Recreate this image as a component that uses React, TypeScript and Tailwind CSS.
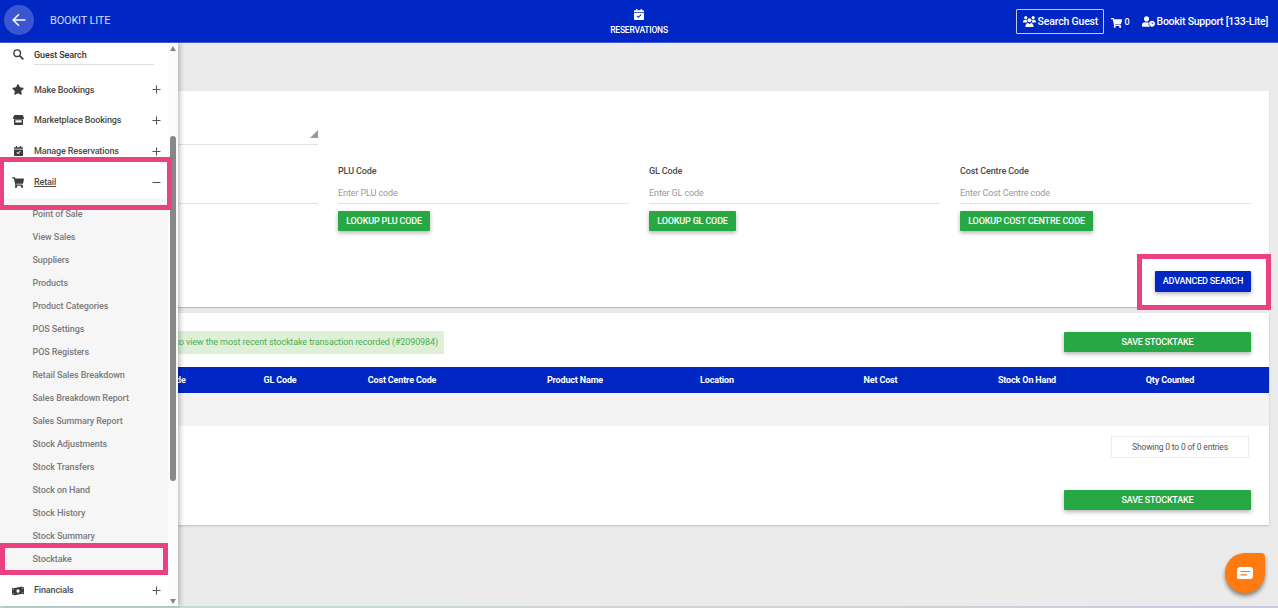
import type { ReactNode } from "react";
import { FaStar, FaShoppingCart, FaMoneyBillWave, FaUserClock } from "react-icons/fa";

const retailLinks = [
  "Point of Sale",
  "View Sales",
  "Suppliers",
  "Products",
  "Product Categories",
  "POS Settings",
  "POS Registers",
  "Retail Sales Breakdown",
  "Sales Breakdown Report",
  "Sales Summary Report",
  "Stock Adjustments",
  "Stock Transfers",
  "Stock on Hand",
  "Stock History",
  "Stock Summary",
  "Stocktake",
];

const lookups = [
  { label: "PLU Code", hint: "Enter PLU code", action: "LOOKUP PLU CODE", width: "w-[92px]" },
  { label: "GL Code", hint: "Enter GL code", action: "LOOKUP GL CODE", width: "w-[87px]" },
  { label: "Cost Centre Code", hint: "Enter Cost Centre code", action: "LOOKUP COST CENTRE CODE", width: "w-[133px]" },
];

const columns = ["GL Code", "Cost Centre Code", "Product Name", "Location", "Net Cost", "Stock On Hand", "Qty Counted"];

function Toggle({ open = false }: { open?: boolean }) {
  return (
    <svg className="h-[9px] w-[9px] text-[#555]" viewBox="0 0 9 9" fill="none" stroke="currentColor" strokeWidth="1.1">
      <path d={open ? "M0.5 4.5H8.5" : "M0.5 4.5H8.5M4.5 0.5V8.5"} />
    </svg>
  );
}

function CalendarIcon({ className }: { className: string }) {
  return (
    <svg className={className} viewBox="0 0 10 11">
      <path d="M2 0H3.4V1.2H6.6V0H8V1.2H9.2A.8.8 0 0 1 10 2V3.1H0V2A.8.8 0 0 1 .8 1.2H2Z" fill="currentColor" />
      <path
        fillRule="evenodd"
        d="M0 3.8H10V10.2A.8.8 0 0 1 9.2 11H.8A.8.8 0 0 1 0 10.2ZM7.4 5.9 6.7 5.3 4.5 7.6 3.4 6.6 2.7 7.3 4.5 9Z"
        fill="currentColor"
      />
    </svg>
  );
}

function StoreIcon() {
  return (
    <svg className="h-[10px] w-[11px]" viewBox="0 0 11 10" fill="currentColor">
      <path d="M1.4 0H9.6L11 2.8A1.6 1.6 0 0 1 9.5 4.4H1.5A1.6 1.6 0 0 1 0 2.8Z" />
      <path fillRule="evenodd" d="M1 4.4H10V9.2A.8.8 0 0 1 9.2 10H1.8A.8.8 0 0 1 1 9.2ZM2.4 5.2V7.4H8.6V5.2Z" />
    </svg>
  );
}

function GroupIcon() {
  return (
    <svg className="h-[11px] w-[13px]" viewBox="0 0 13 11" fill="currentColor">
      <circle cx="2.8" cy="1.7" r="1.6" />
      <circle cx="10.2" cy="1.7" r="1.6" />
      <circle cx="6.5" cy="4.3" r="2" />
      <path d="M0 6.2C0 4.6 1 3.8 2.4 3.8 3 3.8 3.5 3.9 3.8 4.2 3.7 5.2 4 5.8 4.6 6.4H0Z" />
      <path d="M13 6.2C13 4.6 12 3.8 10.6 3.8 10 3.8 9.5 3.9 9.2 4.2 9.3 5.2 9 5.8 8.4 6.4H13Z" />
      <path d="M2.4 11C2.4 8.4 3.6 7 5.2 7L6.5 8.2 7.8 7C9.4 7 10.6 8.4 10.6 11Z" />
    </svg>
  );
}

function MenuItem({ icon, label, height, open = false }: { icon: ReactNode; label: string; height: string; open?: boolean }) {
  return (
    <div className={`flex shrink-0 items-center pr-[7px] pl-[12px] ${height}`}>
      <span className="flex w-[12px] justify-center text-[#3c3c3c]">{icon}</span>
      <span
        className={`ml-[10px] flex-1 pt-px text-[9px] font-medium tracking-[-0.13px] whitespace-nowrap text-[#4a4a4a] ${open ? "underline underline-offset-1" : ""}`}
      >
        {label}
      </span>
      <Toggle open={open} />
    </div>
  );
}

function Sidebar() {
  return (
    <aside className="z-10 flex w-[178px] shrink-0 bg-white shadow-[2px_0_5px_rgba(0,0,0,0.25)]">
      <nav className="flex w-[168px] flex-col">
        <div className="flex h-[32px] items-start pl-[13px]">
          <svg className="mt-[6px] h-[11px] w-[11px] text-[#3c3c3c]" viewBox="0 0 11 11" fill="none" stroke="currentColor">
            <circle cx="4.2" cy="4.2" r="3.3" strokeWidth="1.4" />
            <path d="M6.8 6.8 10.3 10.3" strokeWidth="1.8" />
          </svg>
          <div className="ml-[10px] h-[22px] w-[120px] border-b border-[#dedede] pt-[6px] text-[9px] leading-[13px] font-medium tracking-[-0.1px] text-[#333]">
            Guest Search
          </div>
        </div>
        <MenuItem height="h-[30px]" label="Make Bookings" icon={<FaStar className="h-[11px] w-[12px]" />} />
        <MenuItem height="h-[31px]" label="Marketplace Bookings" icon={<StoreIcon />} />
        <MenuItem height="h-[31px]" label="Manage Reservations" icon={<CalendarIcon className="h-[10px] w-[9px]" />} />
        <MenuItem height="h-[31px]" label="Retail" open icon={<FaShoppingCart className="h-[11px] w-[12px]" />} />
        <div className="flex h-[378px] flex-col bg-[#f6f6f6] pt-[5px]">
          {retailLinks.map((link) => (
            <div
              key={link}
              className="flex h-[23.05px] shrink-0 items-center pl-[32.5px] text-[9px] font-medium tracking-[-0.1px] whitespace-nowrap text-[#7b7b7b]"
            >
              {link}
            </div>
          ))}
        </div>
        <MenuItem height="h-[31px]" label="Financials" icon={<FaMoneyBillWave className="h-[12px] w-[12px]" />} />
      </nav>
      <div className="flex w-[10px] flex-col items-center bg-[#fbfbfb] pt-[3px] pb-[2px]">
        <svg className="h-[5px] w-[6px] shrink-0 text-[#858585]" viewBox="0 0 6 5" fill="currentColor">
          <path d="M3 0 6 5H0z" />
        </svg>
        <div className="mt-[85px] h-[345px] w-[6px] shrink-0 rounded-full bg-[#888]" />
        <div className="flex-1" />
        <svg className="h-[5px] w-[6px] shrink-0 text-[#858585]" viewBox="0 0 6 5" fill="currentColor">
          <path d="M0 0H6L3 5z" />
        </svg>
      </div>
    </aside>
  );
}

function Header() {
  return (
    <header className="z-20 flex h-[43px] shrink-0 items-start justify-between border-b border-[#4258cf] bg-[#0027c3] text-white">
      <div className="flex w-[500px] items-center pt-[5px] pl-[4px]">
        <span className="flex h-[30px] w-[30px] items-center justify-center rounded-full bg-[#3a56d0]">
          <svg className="mr-px h-[14px] w-[14px]" viewBox="0 0 14 14" fill="none" stroke="currentColor" strokeWidth="1.5">
            <path d="M13.5 7H1.2M7 1.2 1.2 7 7 12.8" />
          </svg>
        </span>
        <span className="ml-[16px] pt-[2px] text-[11px] tracking-[-0.2px] text-[#d5dcf6]">BOOKIT LITE</span>
      </div>
      <div className="flex flex-col items-center pt-[9px]">
        <CalendarIcon className="h-[11px] w-[10px]" />
        <span className="mt-[4px] text-[8.5px] leading-[12px] font-medium tracking-[-0.22px]">RESERVATIONS</span>
      </div>
      <div className="flex w-[500px] items-center justify-end pt-[9px] pr-[10px]">
        <span className="flex h-[25px] w-[88px] items-center justify-center gap-[2px] rounded-[1px] border border-[#c0c9f2] text-[10.5px] font-medium tracking-[-0.18px] whitespace-nowrap">
          <GroupIcon />
          Search Guest
        </span>
        <FaShoppingCart className="mt-[2px] ml-[7px] h-[10px] w-[11px]" />
        <span className="mt-[2px] ml-[2px] text-[9px] font-medium">0</span>
        <FaUserClock className="ml-[12px] h-[11px] w-[13px]" />
        <span className="ml-[2px] pt-px text-[10.5px] font-medium tracking-[-0.24px] whitespace-nowrap">Bookit Support [133-Lite]</span>
      </div>
    </header>
  );
}

function SaveButton() {
  return (
    <button className="h-[20px] w-[187px] rounded-[1px] bg-[#28a745] text-[9px] leading-[21px] font-medium tracking-[-0.2px] text-white shadow-[0_2px_4px_rgba(0,0,0,0.3)]">
      SAVE STOCKTAKE
    </button>
  );
}

function SearchCard() {
  return (
    <section className="flex h-[216px] w-[1091px] shrink-0 flex-col bg-white shadow-[0_1px_1px_rgba(0,0,0,0.2)]">
      <div className="flex h-[54px] w-[140px] items-end justify-end border-b border-[#e2e2e2] pb-[6px]">
        <svg className="h-[8px] w-[8px] text-[#999]" viewBox="0 0 8 8" fill="currentColor">
          <path d="M8 0V8H0z" />
        </svg>
      </div>
      <div className="flex gap-[20px]">
        <div className="h-[59px] w-[140px] border-b border-[#e2e2e2]" />
        {lookups.map((item) => (
          <div key={item.label} className="flex w-[291px] flex-col pt-[19px]">
            <span className="text-[9px] leading-[14px] font-medium tracking-[-0.12px] text-[#4a4a4a]">{item.label}</span>
            <div className="mt-[7px] h-[19px] border-b border-[#e2e2e2] text-[9px] leading-[16px] tracking-[-0.1px] text-[#999]">
              {item.hint}
            </div>
            <button
              className={`mt-[7px] h-[20px] rounded-[1px] bg-[#28a745] text-[9px] leading-[20px] font-medium tracking-[-0.16px] whitespace-nowrap text-white shadow-[0_2px_4px_rgba(0,0,0,0.3)] ${item.width}`}
            >
              {item.action}
            </button>
          </div>
        ))}
      </div>
      <div className="mt-[40px] flex justify-end pr-[18px]">
        <button className="h-[21px] w-[96px] rounded-[1px] bg-[#0027c3] text-[9px] leading-[21px] font-medium tracking-[-0.18px] whitespace-nowrap text-white shadow-[0_2px_4px_rgba(0,0,0,0.3)]">
          ADVANCED SEARCH
        </button>
      </div>
    </section>
  );
}

function StocktakeCard() {
  return (
    <section className="mt-[6px] flex h-[212px] w-[1091px] shrink-0 flex-col bg-white shadow-[0_1px_2px_rgba(0,0,0,0.2)]">
      <div className="flex h-[54px] items-start justify-between pt-[18px] pr-[18px]">
        <div className="flex h-[23px] w-[266px] items-center justify-end bg-[#dff0d8] pt-px pr-[6px] text-[9px] tracking-[-0.11px] whitespace-nowrap text-[#4caf50]">
          to view the most recent stocktake transaction recorded (#2090984)
        </div>
        <div className="flex pt-px">
          <SaveButton />
        </div>
      </div>
      <div className="grid h-[26px] shrink-0 grid-cols-[72px_60px_184px_162px_122px_205px_88px_198px] items-center bg-[#0027c3] pt-px text-center text-[9px] font-bold tracking-[-0.15px] whitespace-nowrap text-white">
        <span className="-ml-[2px] text-left">de</span>
        {columns.map((column) => (
          <span key={column}>{column}</span>
        ))}
      </div>
      <div className="h-[33px] shrink-0 bg-[#f3f3f3]" />
      <div className="flex justify-end pt-[10px] pr-[20px]">
        <div className="flex h-[22px] w-[138px] items-center justify-center border border-[#ebebeb] pt-px text-[8.5px] tracking-[-0.18px] text-[#555]">
          Showing 0 to 0 of 0 entries
        </div>
      </div>
      <div className="mt-[32px] flex justify-end pr-[18px]">
        <SaveButton />
      </div>
    </section>
  );
}

export default function App() {
  return (
    <div className="relative flex h-[608px] w-[1278px] flex-col overflow-hidden bg-[#ebebeb] font-['Roboto',sans-serif]">
      <Header />
      <div className="flex h-[563px] shrink-0">
        <Sidebar />
        <main className="flex w-[1100px] flex-col pt-[48px]">
          <SearchCard />
          <StocktakeCard />
        </main>
      </div>
      <div className="h-[2px] shrink-0 bg-linear-to-r from-[#c3ddd3] via-[#cfd8d8] to-[#c9cbdd]" />

      <div className="absolute top-[157px] left-0 z-20 h-[53px] w-[172px] border-[5px] border-l-4 border-[#ea4183]" />
      <div className="absolute top-[543px] left-0 z-20 h-[32px] w-[168px] border-[5px] border-[#ea4183]" />
      <div className="absolute top-[254px] left-[1137px] z-20 h-[56px] w-[134px] border-[5px] border-[#ea4183]" />

      <div className="absolute top-[553px] left-[1225px] z-20 flex h-[40px] w-[40px] items-center justify-center rounded-[20px] rounded-tr-[4px] bg-[#ff7a10] shadow-[0_3px_4px_rgba(0,0,0,0.45)]">
        <svg className="h-[12px] w-[16px]" viewBox="0 0 16 12">
          <path d="M3.5 0H13A3 3 0 0 1 16 3V9A3 3 0 0 1 13 12H1A1 1 0 0 1 0 11V3.5A3.5 3.5 0 0 1 3.5 0Z" fill="#fff" />
          <path d="M3.5 4.5H13M3.5 7.8H10" stroke="#ff7a10" strokeWidth="1.2" />
        </svg>
      </div>
    </div>
  );
}
